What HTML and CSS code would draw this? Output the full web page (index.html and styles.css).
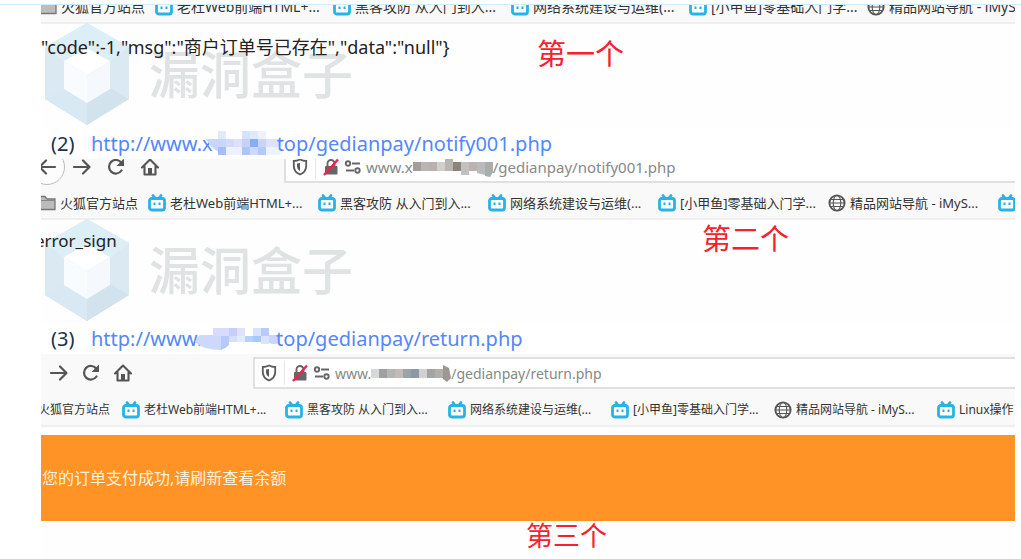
FILE: index.html
```html
<!DOCTYPE html>
<html lang="zh-CN">
<head>
<meta charset="utf-8">
<title>gedianpay</title>
<link rel="stylesheet" href="styles.css">
</head>
<body>
<svg class="defs" aria-hidden="true">
  <symbol id="bili" viewBox="0 0 18 18">
    <path d="M5 1.500l2 2.500M13 1.500l-2 2.500" stroke="#27aee0" stroke-width="2.600" stroke-linecap="round"/>
    <rect x="1.500" y="4.500" width="15" height="11.500" rx="2.200" fill="#fff" stroke="#27b4e4" stroke-width="2.800"/>
    <path d="M6.500 8.500v2.500M11.500 8.500v2.500" stroke="#27aee0" stroke-width="2"/>
  </symbol>
  <symbol id="folder" viewBox="0 0 18 18">
    <path d="M1 15.500V2.500h6l2 2.500h8v10.500z" fill="#bcbcbc" stroke="#777" stroke-width="1.300"/>
    <path d="M1.500 6.500h15" stroke="#888"/>
  </symbol>
  <symbol id="globe" viewBox="0 0 18 18">
    <g fill="none" stroke="#555" stroke-width="1.100"><circle cx="9" cy="9" r="7.600" stroke-width="1.900"/><ellipse cx="9" cy="9" rx="3.800" ry="7.600"/><path d="M1.500 9h15M3 5.500h12M3 12.500h12"/></g>
  </symbol>
  <symbol id="back" viewBox="0 0 20 20"><path d="M18 10H3M9 3.500L2.500 10 9 16.500" fill="none" stroke="#555" stroke-width="2.200" stroke-linecap="round" stroke-linejoin="round"/></symbol>
  <symbol id="forward" viewBox="0 0 20 20"><path d="M2 10h15M11 3.500l6.500 6.500-6.500 6.500" fill="none" stroke="#555" stroke-width="2.200" stroke-linecap="round" stroke-linejoin="round"/></symbol>
  <symbol id="reload" viewBox="0 0 20 20"><path d="M15.500 13.500A6.800 6.800 0 1 1 15.500 6" fill="none" stroke="#555" stroke-width="2.200" stroke-linecap="round"/><path d="M18 1.500v7.500h-7.500z" fill="#555"/></symbol>
  <symbol id="home" viewBox="0 0 20 20"><path d="M2 10.500L10 2.500l8 8M4.500 9.500v8h11v-8" fill="none" stroke="#555" stroke-width="2.100" stroke-linecap="round" stroke-linejoin="round"/><path d="M8 17v-6h4v6z" fill="#555"/></symbol>
  <symbol id="shield" viewBox="0 0 18 18"><path d="M9 1.500C7 2.500 5 3 2.800 3v5c0 4 2.700 7 6.200 8.500 3.500-1.500 6.200-4.500 6.200-8.500V3C13 3 11 2.500 9 1.500z" fill="none" stroke="#5a5a5a" stroke-width="1.800"/><path d="M9 5v8c-2-1-3-3-3-5V5.500z" fill="#5a5a5a"/></symbol>
  <symbol id="lock" viewBox="0 0 18 18"><path d="M5.500 9V5.500a3.500 3.500 0 0 1 7 0V9" fill="none" stroke="#666" stroke-width="1.900"/><rect x="3" y="8" width="12.500" height="8.500" rx="1" fill="#666"/><path d="M2 17L16 1.500" stroke="#f0224e" stroke-width="2.400"/></symbol>
  <symbol id="perms" viewBox="0 0 18 18"><g fill="none" stroke="#666" stroke-width="1.900"><circle cx="4" cy="5.500" r="2.200"/><path d="M8 5.500h8M2 12.500h8"/><circle cx="13.500" cy="12.500" r="2.200"/></g></symbol>
  <symbol id="cube" viewBox="0 0 84 102">
    <path d="M42 0l42 24v52l-42 26L0 76V24z" fill="#dae9f2"/>
    <path d="M42 0l42 24-19 15-23-13-23 13L0 24z" fill="#dceef6"/>
    <path d="M0 76l19-11 23 15v22z" fill="#d8e9f4"/>
    <path d="M84 76L65 65 42 80v22z" fill="#d3e3ee"/>
    <path d="M42 25l23 13-23 14-23-14z" fill="#fff"/>
    <path d="M19 38l23 14v28L19 66z" fill="#f9fcff"/>
    <path d="M65 38L42 52v28l23-14z" fill="#f5f9fd"/>
  </symbol>
</svg>

<main class="article">
  <section class="shot shot-a">
    <nav class="bookmarks">
      <a href="#" class="folder"><svg><use href="#folder"/></svg>火狐官方站点</a>
      <a href="#"><svg><use href="#bili"/></svg>老杜Web前端HTML+...</a>
      <a href="#"><svg><use href="#bili"/></svg>黑客攻防 从入门到入...</a>
      <a href="#"><svg><use href="#bili"/></svg>网络系统建设与运维(...</a>
      <a href="#"><svg><use href="#bili"/></svg>[小甲鱼]零基础入门学...</a>
      <a href="#"><svg><use href="#globe"/></svg>精品网站导航 - iMyS...</a>
    </nav>
    <div class="view">
      <div class="watermark"><svg><use href="#cube"/></svg><span>漏洞盒子</span></div>
      <p class="output">"code":-1,"msg":"商户订单号已存在","data":"null"}</p>
      <strong class="note note-a">第一个</strong>
    </div>
  </section>

  <p class="step"><span class="num">(2)</span><a href="#">http://www.x<svg class="mosaic" viewBox="0 0 78 26">
    <path d="M0 8h20v16Q6 20 0 8z" fill="#c8d5fc"/>
    <path d="M12 0h8v8h-8z" fill="#dfeafb"/><path d="M20 8h8v8h-8z" fill="#d3dafa"/><path d="M12 16h8v8h-8z" fill="#a5bdf9"/>
    <path d="M28 8h8v8h-8z" fill="#dfe1fb"/><path d="M20 16h16v8H20z" fill="#eef2fe"/>
    <path d="M36 0h8v8h-8z" fill="#d4e2fb"/><path d="M36 8h8v8h-8z" fill="#c5d1fa"/><path d="M36 16h8v8h-8z" fill="#aec5fa"/>
    <path d="M44 0h8v8h-8z" fill="#e0e9fc"/><path d="M44 8h8v8h-8z" fill="#87adf8"/><path d="M44 16h8v8h-8z" fill="#c9dafb"/>
    <path d="M52 0h8v8h-8z" fill="#edf2fd"/><path d="M52 8h8v8h-8z" fill="#c9d3fb"/><path d="M52 16h8v8h-8z" fill="#b5c8fa"/>
    <path d="M60 8h18l-6 8H60z" fill="#e0e1fb"/><path d="M60 16h14v8H60z" fill="#eef4fe"/>
  </svg>top/gedianpay/notify001.php</a></p>

  <section class="shot shot-b">
    <div class="toolbar">
      <div class="nav">
        <button class="round" aria-label="后退"><svg><use href="#back"/></svg></button>
        <button aria-label="前进"><svg><use href="#forward"/></svg></button>
        <button aria-label="刷新"><svg><use href="#reload"/></svg></button>
        <button aria-label="主页"><svg><use href="#home"/></svg></button>
      </div>
      <div class="address">
        <svg><use href="#shield"/></svg><i class="rule"></i><svg><use href="#lock"/></svg><svg class="perms"><use href="#perms"/></svg>
        <label for="path-b">www.x</label><svg class="mosaic" viewBox="0 0 80 20" preserveAspectRatio="none">
          <path d="M0 5h8v9H0z" fill="#a49c99"/><path d="M8 5h8v9H8z" fill="#b8b5b4"/><path d="M16 5h8v9h-8z" fill="#b9b1af"/><path d="M24 5h8v9h-8z" fill="#cfcfcc"/><path d="M32 2h8v12h-8z" fill="#b9b6b1"/><path d="M40 5h8v9h-8z" fill="#8b847b"/><path d="M48 5h8v13h-8z" fill="#c3c1bf"/><path d="M56 5h8v9h-8z" fill="#bcb2b1"/><path d="M64 5h8v13l-8-2z" fill="#b8babb"/><path d="M72 5h8v10l-3 5-5-1z" fill="#a9adab"/>
        </svg><input id="path-b" value="/gedianpay/notify001.php">
      </div>
    </div>
    <nav class="bookmarks">
      <a href="#" class="folder"><svg><use href="#folder"/></svg>火狐官方站点</a>
      <a href="#"><svg><use href="#bili"/></svg>老杜Web前端HTML+...</a>
      <a href="#"><svg><use href="#bili"/></svg>黑客攻防 从入门到入...</a>
      <a href="#"><svg><use href="#bili"/></svg>网络系统建设与运维(...</a>
      <a href="#"><svg><use href="#bili"/></svg>[小甲鱼]零基础入门学...</a>
      <a href="#"><svg><use href="#globe"/></svg>精品网站导航 - iMyS...</a>
      <a href="#" aria-label="Linux"><svg><use href="#bili"/></svg></a>
    </nav>
    <div class="view">
      <div class="watermark"><svg><use href="#cube"/></svg><span>漏洞盒子</span></div>
      <p class="output">error_sign</p>
      <strong class="note note-b">第二个</strong>
    </div>
  </section>

  <p class="step"><span class="num">(3)</span><a href="#">http://www.<svg class="mosaic wide" viewBox="0 0 88 26">
    <path d="M0 16q2-6 6-7h12V2h8v22Q8 24 0 16z" fill="#ccd8fc"/>
    <path d="M18 2h16v8H18z" fill="#d8dbfb"/><path d="M26 10h8v9q-4 4-8 5z" fill="#b6c9fb"/>
    <path d="M34 2h8v8h-8z" fill="#c4cffb"/><path d="M34 10h8v6h-8z" fill="#d5defb"/>
    <path d="M42 2h8v8h-8z" fill="#e0e0fb"/><path d="M42 10h8v6h-8z" fill="#dcedfc"/>
    <path d="M50 10h8v6h-8z" fill="#b5d0fb"/><path d="M58 2h8v8h-8z" fill="#d8e2fb"/><path d="M58 10h8v6h-8z" fill="#a8c7fa"/>
    <path d="M66 2h8v8h-8z" fill="#b9cbfb"/><path d="M66 10h8v8h-8z" fill="#dde2fb"/><path d="M74 9h10v8q-5 2-10 0z" fill="#c9d5fb"/>
  </svg>top/gedianpay/return.php</a></p>

  <section class="shot shot-c">
    <div class="toolbar">
      <div class="nav">
        <button aria-label="前进"><svg><use href="#forward"/></svg></button>
        <button aria-label="刷新"><svg><use href="#reload"/></svg></button>
        <button aria-label="主页"><svg><use href="#home"/></svg></button>
      </div>
      <div class="address">
        <svg><use href="#shield"/></svg><i class="rule"></i><svg><use href="#lock"/></svg><svg class="perms"><use href="#perms"/></svg>
        <label for="path-c">www.</label><svg class="mosaic" viewBox="0 0 80 20" preserveAspectRatio="none">
          <path d="M0 6h8v9H0z" fill="#d6d9da"/><path d="M8 6h8v9H8z" fill="#a0a09f"/><path d="M16 6h8v9h-8z" fill="#b5b5b6"/><path d="M24 6h8v9h-8z" fill="#c4bbb8"/><path d="M32 6h8v9h-8z" fill="#9ba2a8"/><path d="M40 6h8v9h-8z" fill="#8e98a2"/><path d="M48 6h8v9h-8z" fill="#d1d1d2"/><path d="M56 6h8v9h-8z" fill="#a4a4a5"/><path d="M64 6h8v9h-8z" fill="#b2aeac"/><path d="M72 2l6 3 2 10-4 4-4-3z" fill="#9d9794"/>
        </svg><input id="path-c" value="/gedianpay/return.php">
      </div>
    </div>
    <nav class="bookmarks">
      <a href="#" class="folder">火狐官方站点</a>
      <a href="#"><svg><use href="#bili"/></svg>老杜Web前端HTML+...</a>
      <a href="#"><svg><use href="#bili"/></svg>黑客攻防 从入门到入...</a>
      <a href="#"><svg><use href="#bili"/></svg>网络系统建设与运维(...</a>
      <a href="#"><svg><use href="#bili"/></svg>[小甲鱼]零基础入门学...</a>
      <a href="#"><svg><use href="#globe"/></svg>精品网站导航 - iMyS...</a>
      <a href="#"><svg><use href="#bili"/></svg>Linux操作</a>
    </nav>
    <p class="banner">您的订单支付成功,请刷新查看余额</p>
    <strong class="note note-c">第三个</strong>
  </section>
</main>
</body>
</html>
```
FILE: styles.css
```css
* { box-sizing: border-box; }
body {
  margin: 0;
  padding-top: 4px;
  background: #fff;
  font-family: "Noto Sans", "Noto Sans CJK SC", sans-serif;
  overflow: hidden;
}
p { margin: 0; }
a { text-decoration: none; }
svg { display: block; flex: none; }
.defs { position: absolute; width: 0; height: 0; }
.article { border-top: 1px solid #cdedfb; padding: 0 6px 0 41px; }
.shot { position: relative; overflow: hidden; background: #fefefe; white-space: nowrap; }

.bookmarks {
  display: flex;
  align-items: center;
  height: 37px;
  padding-top: 5px;
  overflow: hidden;
  background: #f9f9f9;
  border-bottom: 2px solid #efefef;
}
.bookmarks a { display: flex; align-items: center; flex: none; color: #333; line-height: 30px; gap: 4px; }
.bookmarks svg { width: 18px; height: 18px; }
.shot-a .bookmarks { height: 19px; padding-top: 0; align-items: flex-end; font-size: 14px; }
.shot-a .bookmarks a { width: 178px; }
.shot-a .bookmarks .folder { width: 116px; margin-left: -2px; }
.shot-b .bookmarks { font-size: 13px; }
.shot-b .bookmarks a { width: 170px; }
.shot-b .bookmarks .folder { width: 110px; margin-left: -3px; }
.shot-c .bookmarks { font-size: 12px; }
.shot-c .bookmarks a { width: 163px; }
.shot-c .bookmarks .folder { width: 84px; margin-left: -3px; }

.view { position: relative; height: 104px; }
.shot-b .view { height: 103px; }
.output { position: relative; padding-top: 9px; font-size: 18px; line-height: 28px; color: #222; }
.shot-b .output { padding-top: 7px; margin-left: -6px; font-size: 17px; }
.watermark { position: absolute; left: 4px; top: -1px; display: flex; align-items: center; gap: 20px; }
.watermark svg { width: 84px; height: 102px; }
.watermark span { font-size: 51px; line-height: 60px; font-weight: 500; color: #e0e3e3; }
.note { position: absolute; color: #f5222d; font-size: 29px; line-height: 36px; font-weight: 400; }
.note-a { left: 496px; top: 12px; }
.note-b { left: 661px; top: 1px; }
.note-c { left: 485px; bottom: 5px; font-size: 27px; }

.step { display: flex; align-items: center; height: 31px; padding-left: 10px; font-size: 20px; line-height: 30px; color: #20304a; white-space: nowrap; }
.num { width: 40px; }
.step a { display: flex; align-items: center; color: #5487fb; }
.step .mosaic { width: 78px; height: 26px; margin: 0 -7px; }
.step .wide { width: 88px; }

.toolbar { display: flex; align-items: center; height: 37px; background: #f9f9f9; }
.nav { display: flex; align-items: center; gap: 14px; flex: none; }
.nav button { display: grid; place-items: center; width: 20px; height: 20px; padding: 0; border: 0; background: none; }
.nav svg { width: 20px; height: 20px; }
.nav .round { width: 36px; height: 36px; border: 1px solid #bbb; border-radius: 50%; background: #fdfdfd; margin-right: -7px; }
.address { display: flex; align-items: center; flex: 1; height: 32px; background: #fff; border: 2px solid #e0e0e0; border-right: 0; padding-left: 5px; color: #888; }
.address svg { width: 18px; height: 18px; }
.address .rule { width: 1px; height: 24px; margin: 0 6px; background: #e5e5e5; }
.address .perms { margin: 0 4px; }
.address .mosaic { width: 80px; height: 20px; }
.address input { flex: 1; min-width: 0; padding: 0; border: 0; outline: 0; background: none; font: inherit; color: inherit; }
.shot-b .toolbar { height: 24px; align-items: flex-end; }
.shot-b .nav { width: 255px; height: 32px; margin-left: -12px; gap: 14px; }
.shot-b .address { font-size: 15px; }
.shot-c .toolbar { height: 36px; padding-top: 2px; }
.shot-c .nav { width: 212px; padding-left: 8px; gap: 12px; }
.shot-c .address { font-size: 14px; }
.shot-c { height: 205px; }
.banner { margin-top: 8px; padding: 28px 1px; background: #ff9326; color: #fff1df; font-size: 16px; line-height: 30px; }
```
